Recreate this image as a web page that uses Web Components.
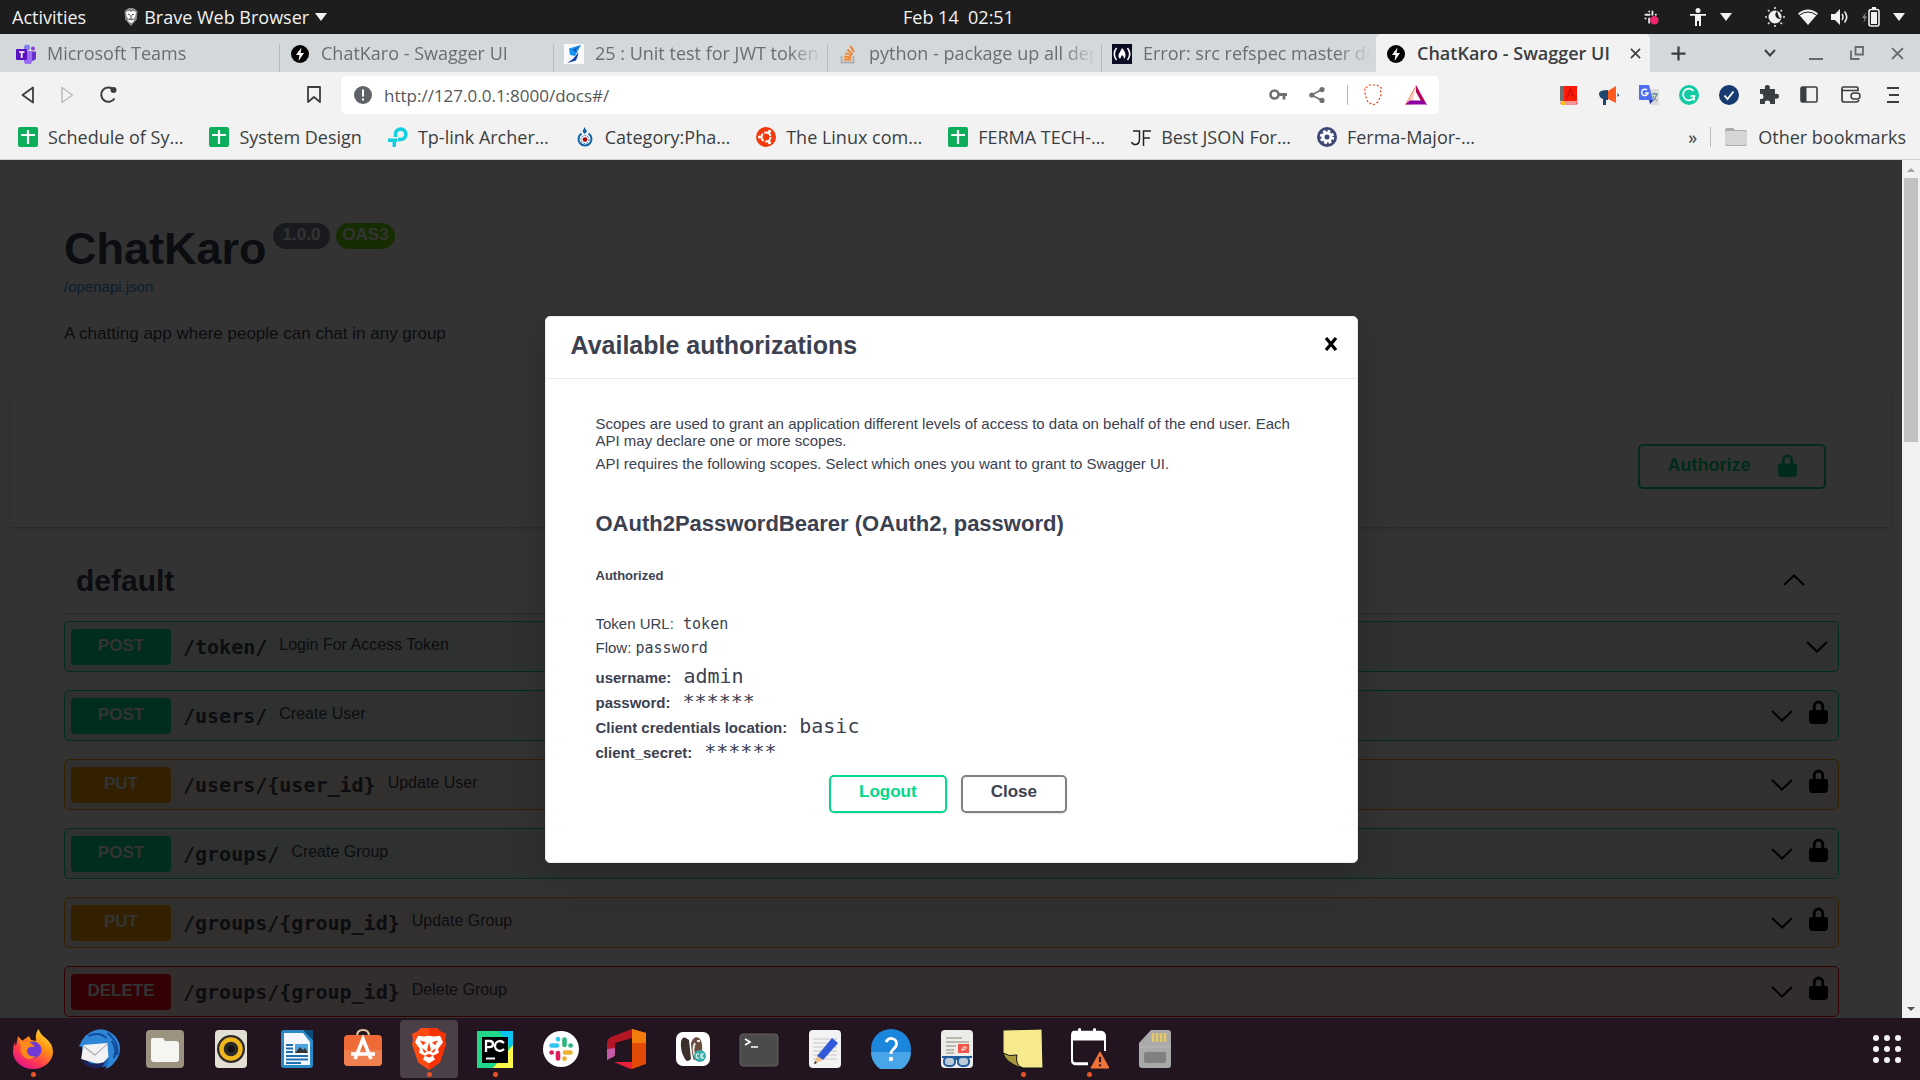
<!DOCTYPE html>
<html lang="en">
<head>
<meta charset="utf-8">
<title>ChatKaro - Swagger UI</title>
<style>
  html, body { margin: 0; height: 100%; }
  body { font-family: "Open Sans", "Noto Sans", sans-serif; font-size: 18px; overflow: hidden; background: #23151f; }
</style>
</head>
<body>
<desktop-shell></desktop-shell>

<script>
const ICONS = {
  /* desktop bar */
  brave: ['0 0 14 18', '<path d="M2.500 1.500 5 0h4l2.500 1.500 2 2-.8 8L7 18 1.300 11.500.5 3.500z" fill="#8d8d8d"/><path d="M2 4l3-1 2 1 2-1 3 1-1 5-2 2 1 2-3 2-3-2 1-2-2-2z" fill="#fff"/><path d="M4 6l2 1M10 6 8 7M7 7v4M5 11l2 1 2-1" stroke="#333" fill="none"/>'],
  tri: ['0 0 12 8', '<path d="M0 0h12L6 8z" fill="#f2f2f2"/>'],
  slackTray: ['0 0 16 16', '<g stroke="#e6e6e6" stroke-width="2" stroke-linecap="round"><path d="M5.500 1.500v.2M1.500 5h4.500M9 1.500V5M12.500 5h.2M1.500 9h.2M5.500 9v4.500"/></g><circle cx="11" cy="11" r="4.500" fill="#f0266f"/>'],
  person: ['0 0 16 18', '<circle cx="8" cy="2.500" r="2.500" fill="#f2f2f2"/><path d="M0 6h16v1.800h-5V18H9v-5H7v5H5V7.800H0z" fill="#f2f2f2"/>'],
  night: ['0 0 20 20', '<circle cx="10" cy="10" r="6.500" fill="#f2f2f2"/><path d="M12 4a5 5 0 0 0-1 6 5 5 0 0 0 5 2l-2-2z" fill="#1d1d1d"/><g stroke="#ddd" stroke-width="1.600"><path d="M10 0v2M10 18v2M0 10h2M18 10h2M3 3l1.500 1.500M15.500 15.500 17 17M3 17l1.500-1.500M15.500 4.500 17 3"/></g>'],
  wifi: ['0 0 20 16', '<path d="M0 4.500Q10-3.500 20 4.500L10 16z" fill="#f2f2f2"/><path d="M1.500 6Q10 0 18.500 6" stroke="#1d1d1d" stroke-width="1" fill="none"/>'],
  sound: ['0 0 18 16', '<path d="M0 5h4l5-5v16l-5-5H0z" fill="#f2f2f2"/><path d="M11 5q2 3 0 6M13.500 2.500q4.500 5.500 0 11" stroke="#e8e8e8" stroke-width="1.600" fill="none"/>'],
  battery: ['0 0 18 20', '<path d="M4 5 0 11h2.500L1.500 16 5 9.500H2.800z" fill="#888"/><rect x="7" y="2.500" width="10" height="16.500" rx="2" fill="none" stroke="#f2f2f2" stroke-width="1.600"/><rect x="9" y="5" width="6" height="12" fill="#f2f2f2"/><path d="M10 0h4v2h-4z" fill="#f2f2f2"/>'],
  /* favicons */
  teams: ['0 0 20 20', '<circle cx="11" cy="3.500" r="3" fill="#7b83eb"/><circle cx="17" cy="4.500" r="2" fill="#8a3fdc"/><path d="M8 7h8v8a4 4 0 0 1-8 3z" fill="#9b6cf0"/><path d="M16 7.500h4v6a3 3 0 0 1-4 3z" fill="#6a2fd0"/><rect y="5" width="11" height="11" rx="1" fill="#5a10c0"/><path d="M3 8h5.500M5.700 8v6" stroke="#fff" stroke-width="1.700"/>'],
  fastapi: ['0 0 20 20', '<circle cx="10" cy="10" r="9" fill="#050505"/><path d="M11.500 3.500 6 11h3.500l-1 6L14 9h-3.500z" fill="#fff"/>'],
  bolt: ['0 0 20 20', '<path fill="#fafafa" d="M0 0h20v20H0z"/><path d="M17 1 5 4.500 6 11l5 1z" fill="#1493f0"/><path d="M17 1 9 6l5 3-5 6-6 4 9-2.500 2.500-7L11 6z" fill="#0a3ea8"/>'],
  stack: ['0 0 20 20', '<path d="M3.500 12v6.500h12V12" stroke="#b0aeb0" stroke-width="1.800" fill="none"/><g stroke="#f48024" stroke-width="1.800"><path d="M6 15.500h7M6.200 12.500l7 .8M7.300 9l6.500 2.500M9.500 5.500l5 4.800M12.500 2l3.500 6"/></g>'],
  fcc: ['0 0 20 20', '<path fill="#0a0a23" d="M0 0h20v20H0z"/><path d="M4.500 4Q0 10 4.500 16M15.500 4Q20 10 15.500 16" stroke="#fff" stroke-width="1.600" fill="none"/><path d="M10 4q4 4 3.500 8.500L12 15q0-3-2-4-1 2-2 4-2-2-1.500-4.500Q8 8 10 4" fill="#fff"/>'],
  /* window controls */
  x: ['0 0 12 12', '<path d="M1 1l10 10M11 1 1 11" stroke="currentColor" stroke-width="1.800"/>'],
  plus: ['0 0 16 16', '<path d="M8 0.500v15M0.500 8h15" stroke="#3b3e40" stroke-width="2.400"/>'],
  down: ['0 0 12 8', '<path d="M1 1l5 5.500L11 1" stroke="#3b3e40" stroke-width="2" fill="none"/>'],
  mini: ['0 0 14 14', '<path d="M0 13h14" stroke="#666a6d" stroke-width="2"/>'],
  restore: ['0 0 14 14', '<path d="M5.500 1H13v7.500H5.500zM1 4.500V13h8.500" fill="none" stroke="#666a6d" stroke-width="1.800"/>'],
  /* toolbar */
  back: ['0 0 14 18', '<path d="M12 1.500v15L1.500 9z" fill="none" stroke="#3b3e40" stroke-width="1.800" stroke-linejoin="round"/>'],
  fwd: ['0 0 14 18', '<path d="M2 1.500v15L12.500 9z" fill="none" stroke="#bcbcbc" stroke-width="1.500" stroke-linejoin="round"/>'],
  reload: ['0 0 18 18', '<path d="M14.500 3.500A7.200 7.200 0 1 0 15.500 12.500" fill="none" stroke="#3b3e40" stroke-width="2"/><circle cx="14.500" cy="4" r="3" fill="#3b3e40"/>'],
  mark: ['0 0 14 18', '<path d="M1 1h12v15l-6-5-6 5z" fill="none" stroke="#3b3e40" stroke-width="1.800" stroke-linejoin="round"/>'],
  info: ['0 0 18 18', '<circle cx="9" cy="9" r="9" fill="#5f6368"/><path d="M9 3.500v7M9 12.500v2" stroke="#fff" stroke-width="2"/>'],
  key: ['0 0 18 12', '<circle cx="5.500" cy="5.500" r="4" fill="none" stroke="#6f7072" stroke-width="2.600"/><path d="M9.500 5.500H18M15 6v4.500" stroke="#6f7072" stroke-width="2.800"/>'],
  share: ['0 0 16 16', '<path d="M13 2.500 2.500 8 13 13.500" fill="none" stroke="#6f7072" stroke-width="1.600"/><g fill="#6f7072"><circle cx="13" cy="2.600" r="2.600"/><circle cx="2.800" cy="8" r="2.600"/><circle cx="13" cy="13.400" r="2.600"/></g>'],
  shield: ['0 0 20 22', '<path d="M6 1h8l2 2 2.500 1-1 4 .5 3-3 7-5 3-5-3-3-7 .5-3-1-4L4 3z" fill="none" stroke="#f43a10" stroke-width="1.200" stroke-dasharray="2 2"/>'],
  bat: ['0 0 22 20', '<path d="M11 0 0 20h7z" fill="#ff9a80" opacity=".5"/><path d="M11 1 1 19" stroke="#f43a10" stroke-dasharray="1 1" fill="none"/><path d="M11 0l11 20-6-4-5-9z" fill="#b8005c"/><path d="M0 19.500 5 15.500h12l5 4z" fill="#8a00a0"/>'],
  book: ['0 0 20 20', '<path d="M1 1h17v15H1z" fill="#ff1a08"/><path d="M1 1h4v15H1z" fill="#707070"/><path d="M2 17h16v2H2z" fill="#fff" stroke="#e33" stroke-width="1"/><path d="M2 16h3l2 4H2z" fill="#f8c400"/><path d="M7.500 13 11.500 4l4 9M9 10h5" stroke="#c81010" stroke-width="1.200" fill="none"/>'],
  horn: ['0 0 20 20', '<path d="M0 8q1-3 9-3v10H7v5H4v-6Q0 13 0 8" fill="#20466e"/><path d="M9 6l8-5v17l-8-4z" fill="#ff5a1c"/><path d="M18.500 8l2 2-2 2z" fill="#20466e"/>'],
  translate: ['0 0 20 20', '<path d="M9 4h11v16h-9z" fill="#dcdcdc"/><path d="M0 0h10l4 15H1q-1 0-1-1z" fill="#4c6ff0"/><path d="M10 15h5l-4 4z" fill="#2a35b8"/><path d="M8 5A3.200 3.200 0 1 0 9 8H6" fill="none" stroke="#fff" stroke-width="1.500"/><path d="M13 9h6M16 8v2M18 9q-1 5-5 7M14 11q1 3 4 5" stroke="#547b8a" fill="none"/>'],
  gram: ['0 0 20 20', '<circle cx="10" cy="10" r="10" fill="#10cba4"/><path d="M14.500 6A5.800 5.800 0 1 0 15.500 11H11.500M15 11v4.500" fill="none" stroke="#fff" stroke-width="1.700"/>'],
  check: ['0 0 20 20', '<circle cx="10" cy="10" r="10" fill="#173a70"/><path d="M5.500 10.500l3 3.500L14.500 6.500" fill="none" stroke="#fff" stroke-width="1.900"/>'],
  puzzle: ['0 0 20 20', '<path d="M1 4h5q-1-4 2.300-4t2.400 4H16v5q4-.8 4 2.300t-4 2.400V19h-5q.8-3.500-2.500-3.500T6 19H1v-5q3.500.5 3.500-2.600T1 9z" fill="#3b3e40"/>'],
  side: ['0 0 18 18', '<rect x="1" y="1" width="16" height="15" rx="1.500" fill="none" stroke="#3b3e40" stroke-width="1.600"/><path d="M1 1h5.500v15H1z" fill="#3b3e40"/>'],
  wallet: ['0 0 20 18', '<path d="M17 5V2.500Q17 1 15.500 1h-13Q1 1 1 2.500V14q0 2 2 2h12q2 0 3-2" fill="none" stroke="#3b3e40" stroke-width="1.700"/><path d="M1 3q0 1.500 2 1.500h14" fill="none" stroke="#3b3e40" stroke-width="1.700"/><rect x="10" y="7" width="9" height="6" rx="3" fill="none" stroke="#3b3e40" stroke-width="1.500"/>'],
  menu: ['0 0 14 18', '<path d="M1 2h12M3 9h10M1 16h12" stroke="#3b3e40" stroke-width="2"/>'],
  /* bookmark favicons */
  sheet: ['0 0 20 20', '<rect width="20" height="20" rx="2" fill="#0cae5c"/><path d="M10 3v14M3 8h14" stroke="#fff" stroke-width="2.200"/>'],
  tplink: ['0 0 20 20', '<path d="M7.500 10V7a5.200 5.200 0 1 1 5.200 5.500H10" fill="none" stroke="#12cfe0" stroke-width="3.600"/><path d="M0 11.500h9.300V15H8v5H4.500v-5H0z" fill="#12cfe0"/>'],
  commons: ['0 0 20 20', '<path d="M9.500 0l2.500 4.500L9.500 7 7.500 4.500z" fill="#0c63a8"/><path d="M6.500 6.500a6.500 6.500 0 1 0 7 0" fill="none" stroke="#0c63a8" stroke-width="2"/><circle cx="10" cy="12.500" r="4" fill="none" stroke="#0c63a8" stroke-width="1" stroke-dasharray="1.500 1.500"/><circle cx="10" cy="12.500" r="2.300" fill="#b00000"/>'],
  ubuntu: ['0 0 20 20', '<circle cx="10" cy="10" r="10" fill="#f43a0c"/><circle cx="10" cy="10" r="4.500" fill="none" stroke="#fff" stroke-width="2" stroke-dasharray="7.900 1.500"/><g fill="#fff"><circle cx="3.500" cy="10" r="1.600"/><circle cx="13.500" cy="4.300" r="1.600"/><circle cx="13.500" cy="15.700" r="1.600"/></g>'],
  jf: ['0 0 20 20', '<path d="M2 4h6.500v8q0 6-5 5.500-2-.5-3-2.500M12.500 19V4H20M12.500 11H19" fill="none" stroke="#222" stroke-width="1.500"/>'],
  gear: ['0 0 20 20', '<circle cx="10" cy="10" r="10" fill="#3d4674"/><circle cx="10" cy="10" r="4" fill="none" stroke="#fff" stroke-width="3"/><circle cx="10" cy="10" r="6" fill="none" stroke="#fff" stroke-width="2.400" stroke-dasharray="2.700 2"/>'],
  folder: ['0 0 24 20', '<path d="M1 4q0-3 2-3h6l2 2h10q2 0 2 2v12q0 2-2 2H3q-2 0-2-2z" fill="#aaa"/><path d="M1 6q0-2 2-2h18q2 0 2 2v10q0 2-2 2H3q-2 0-2-2z" fill="#d6d6d6"/>'],
  /* document */
  lock: ['0 0 20 24', '<path d="M4 10V6.500a6 6 0 0 1 12 0V10h1.500Q20 10 20 12v8q0 4-4 4H4q-4 0-4-4v-8q0-2 2.500-2zM7 10h6V6.500a3 3 0 0 0-6 0z" fill="currentColor"/>'],
  chevron: ['0 0 22 12', '<path d="M1 1l10 9.500L21 1" fill="none" stroke="#000" stroke-width="2"/>'],
  closeX: ['0 0 14 14', '<path d="M2 1l10 12M12 1 2 13" stroke="#000" stroke-width="3.200"/>'],
  /* dock */
  firefox: ['0 0 40 40', '<defs><linearGradient id="a" x1="1" y1="0" x2=".3" y2="1"><stop stop-color="#fff44f"/><stop offset=".4" stop-color="#ff980e"/><stop offset=".75" stop-color="#ff3a50"/><stop offset="1" stop-color="#e31587"/></linearGradient></defs><path d="M5 7l4 5q4-3 7-5l2 4 5 1Q22 4 25.500 0q1.500 5 7 9 7.500 6 7.500 14a20 17 0 0 1-40 0q0-6 2-10 0 3 1 4z" fill="url(#a)"/><circle cx="20" cy="21" r="8.500" fill="#7139d4"/><path d="M5 8l6 5q5-1 7 1l4 4q-8-1-8 4 1 7 9 5-6 6-12 1-5-5-3-10z" fill="#ff8a1c"/>'],
  thunderbird: ['0 0 40 40', '<circle cx="22" cy="20" r="18" fill="#1a6bbd"/><path d="M1 17Q6 4 17 1q10-3 19 7 8 12-1 25-3 5-9 7 4-6 3-11z" fill="#2f86d6"/><path d="M28 4q12 10 9 22M32 12q6 8 2 17M10 7Q20 2 27 9" stroke="#134d9c" stroke-width="2" fill="none"/><path d="M5 16 28 14l1 14-7 8L3 30z" fill="#f2f2f4"/><path d="M5 17l11 9 12-11" stroke="#aaa" fill="none"/><path d="M2 29q8 9 24 4-3 7-9 6Q5 38 2 29" fill="#1a2460"/>'],
  files: ['0 0 40 40', '<rect x="1" y="1" width="38" height="38" rx="4" fill="#9b927f"/><path d="M6 11q0-2 2-2h10l2 3h11q3 0 3 3v15q0 3-3 3H9q-3 0-3-3z" fill="#f5f5f2"/>'],
  rhythm: ['0 0 40 40', '<rect x="4" y="1" width="32" height="38" rx="4" fill="#e4dfd4"/><circle cx="20" cy="20" r="14" fill="#2b2b2b"/><circle cx="20" cy="20" r="9.500" fill="none" stroke="#f0b71c" stroke-width="4.500"/><circle cx="20" cy="20" r="3.500" fill="#111"/>'],
  writer: ['0 0 40 40', '<path d="M7 1h20l9 10v25q0 3-3 3H7q-3 0-3-3V4q0-3 3-3" fill="#2b8ac8"/><path d="M7 4h19l7 9v23H7z" fill="#f4f8fc"/><path d="M26 1h10v10z" fill="#0d4a78"/><path d="M9 16h7M9 19.500h7M9 23h7M9 27h22M9 30.500h22M9 34h15" stroke="#1f6fb0" stroke-width="1.800"/><path d="M18 15h13v9H18z" fill="#4ba5de"/><path d="M18 24l5-6 3 3 2-2 3 5z" fill="#333"/>'],
  software: ['0 0 40 40', '<path d="M14 7Q14 1 20 1t6 6" fill="none" stroke="#e7c8a0" stroke-width="2"/><rect x="1" y="6" width="38" height="31" rx="4" fill="#ef6a37"/><path d="M1 21h38v12q0 4-4 4H5q-4 0-4-4z" fill="#f08050"/><path d="M12 30l8-20 8 20M8 25h24" stroke="#fff" stroke-width="3.600" fill="none"/>'],
  braveApp: ['0 0 40 44', '<path d="M12 0h16l4 4 5 2-1 7 1 4-6 19-11 8L9 36 3 17l1-4-1-7 5-2z" fill="#ff4a14"/><path d="M20 0h8l4 4 5 2-1 7 1 4-6 19-11 8z" fill="#f93208"/><path d="M9 8l6 1 5-1 5 1 6-1 3 7-5 7 1 4-6 3 2 4-6 4-6-4 2-4-6-3 1-4-5-7z" fill="#fff"/><path d="M11 13l6 2-3 3zM29 13l-6 2 3 3zM20 15l2 8-2 2-2-2zM13 21l5 4-3 1zM27 21l-5 4 3 1zM16 29l4-2 4 2-4 2z" fill="#fa400f"/>'],
  pycharm: ['0 0 40 40', '<path d="M2 2h36v37H2z" fill="#21d789"/><path d="M24 2h14v20z" fill="#07c3f2"/><path d="M38 16v23H18z" fill="#fcf84a"/><path d="M7 8h26v26H7z" fill="#000"/><path d="M11 23V12h3.500q3.500 0 3.500 3t-3.500 3.200H11M29 14q-2-2-4.500-2-4.500 1-4.500 5t4.500 5q2.500 0 4.500-2" fill="none" stroke="#fff" stroke-width="2.300"/><path d="M11 29.500h9" stroke="#fff" stroke-width="2"/>'],
  slack: ['0 0 40 40', '<circle cx="20" cy="20" r="18" fill="#fff"/><g stroke-width="4.600" stroke-linecap="round" fill="none"><path d="M17 10v.2M10.500 16.500H16" stroke="#36c5f0"/><path d="M23.500 10.500V16M29.500 16.500h.2" stroke="#2eb67d"/><path d="M24 23.500h5.500M23.500 29.500v.2" stroke="#ecb22e"/><path d="M17 24v5.500M10.500 23.500h.2" stroke="#e01e5a"/></g>'],
  office: ['0 0 40 40', '<path d="M25 0 4 8Q0 10 0 14v16l6-2q2-1 2-4V14l17-5z" fill="#b51625"/><path d="M0 20v11l6-3q2-1 2-4v-5z" fill="#c65aa8"/><path d="M25 0l14 4v31l-14 5z" fill="#e34a08"/><path d="M25 0l14 4v10H25z" fill="#f47c0c"/><path d="M7 33h18v7q-2 0-4-1z" fill="#e8203a"/>'],
  beaver: ['0 0 40 40', '<rect x="3" y="3" width="34" height="34" rx="7" fill="#fff"/><path d="M8 13q1-6 5-4l3 2 2 19q-4 4-6 0Q7 22 8 13" fill="#3c2f2b"/><path d="M18 14q3-8 8-5 4 3 3 14-1 8-8 8-2-3-3-17" fill="#6b4d3f"/><path d="M22 14q-3 6 0 14M24 12h3" stroke="#eee" stroke-width="1.800" fill="none"/><circle cx="27" cy="27" r="6" fill="#3aafa9"/><path d="M26 25q-3-1-3 2t3 2M31 25h-3v4h3M28 27h2" stroke="#fff" fill="none"/>'],
  terminal: ['0 0 40 40', '<rect x="1" y="5" width="38" height="32" rx="3" fill="#4b4b4b" stroke="#606060"/><path d="M6 10l5 3-5 3M12 18h7" stroke="#fff" stroke-width="1.700" fill="none"/>'],
  editor: ['0 0 40 40', '<rect x="4" y="1" width="32" height="38" rx="4" fill="#f3f3f3"/><path d="M8 10h24M8 14h24M8 18h24M8 22h24M8 26h24M8 30h24" stroke="#c8c8c8"/><path d="M27 9l6 5-15 17-6-4z" fill="#3158d8"/><path d="M12 27l6 4-9 4z" fill="#edc08d"/><path d="M9 35l1-3 2 2z" fill="#222"/>'],
  help: ['0 0 40 40', '<circle cx="20" cy="20" r="20" fill="#1c86dc"/><path d="M0 23h40a20 20 0 0 1-40 0" fill="#48a5e8"/><path d="M15 13q2-4 6-3.500 5 1 4.500 6-.5 3-3.500 5-2 1.500-2 4.500" fill="none" stroke="#fff" stroke-width="2.800"/><circle cx="20" cy="30" r="2.200" fill="#fff"/>'],
  viewer: ['0 0 40 40', '<rect x="4" y="1" width="32" height="38" rx="4" fill="#ececea"/><path d="M9 9h16M9 13h23M9 17h10M9 21h8M9 24h8" stroke="#aaa79a" stroke-width="1.700"/><path d="M21 15h11v9H21z" fill="#f05548"/><path d="M24 21q6 0 5-3-4-1-3 3" stroke="#fff" fill="none"/><path d="M5 28h30M17 30h5" stroke="#245d9c" stroke-width="2"/><rect x="7" y="28" width="11" height="9" rx="4" fill="#bcc9d6" stroke="#245d9c" stroke-width="2"/><rect x="21" y="28" width="11" height="9" rx="4" fill="#bcc9d6" stroke="#245d9c" stroke-width="2"/>'],
  sticky: ['0 0 40 40', '<path d="M0 1 39 0l1 39H20Q3 32 0 25z" fill="#f7e98e" stroke="#111"/><path d="M0 24q6 4 14 2-2 8 4 13Q2 33 0 24" fill="#a79a3c" stroke="#111"/>'],
  calendar: ['0 0 40 44', '<path d="M5 3h4V1q2-2 3 0v2h12V1q2-2 3 0v2h4q6 0 6 6v15h-2V13H4v20q0 3 3 3h12v3H7q-5 0-5-5V8q0-5 3-5" fill="#fff"/><path d="M31 25 22 42h18z" fill="#f37338" stroke="#f37338" stroke-linejoin="round"/><path d="M31 30v6M31 38v2" stroke="#222" stroke-width="2.200"/>'],
  sdcard: ['0 0 40 40', '<path d="M16 1h17q3 0 3 3v32q0 3-3 3H7q-3 0-3-3V14z" fill="#a9a9a9"/><path d="M18 4v9M22 4v9M26 4v9M30 4v9" stroke="#e8c860" stroke-width="2.500"/><rect x="9" y="23" width="22" height="11" rx="2" fill="#808080"/><path d="M4 18h32" stroke="#b8b8b8"/>'],
  grid: ['0 0 28 28', '<g fill="#f4f4f4"><circle cx="3" cy="3" r="3"/><circle cx="14" cy="3" r="3"/><circle cx="25" cy="3" r="3"/><circle cx="3" cy="14" r="3"/><circle cx="14" cy="14" r="3"/><circle cx="25" cy="14" r="3"/><circle cx="3" cy="25" r="3"/><circle cx="14" cy="25" r="3"/><circle cx="25" cy="25" r="3"/></g>']
};

const BASE = `*{box-sizing:border-box} button{font:inherit;color:inherit;background:none;border:0;padding:0;margin:0;display:flex;align-items:center;justify-content:center} a{color:inherit;text-decoration:none} h1,h2,h3,h4,p{margin:0}`;
const define = (name, render) => customElements.define(name, class extends HTMLElement {
  connectedCallback() {
    if (this.shadowRoot) return;
    const [css, html] = render(this);
    this.attachShadow({ mode: 'open' }).innerHTML = `<style>${BASE}${css}</style>${html}`;
  }
});
const icon = (name, w, h = w) => `<ui-icon name="${name}" style="width:${w}px;height:${h}px"></ui-icon>`;

define('ui-icon', el => {
  const [box, body] = ICONS[el.getAttribute('name')];
  return [`:host{display:block;flex:none} svg{display:block;width:100%;height:100%}`,
    `<svg viewBox="${box}" preserveAspectRatio="none" aria-hidden="true">${body}</svg>`];
});

define('system-bar', () => [`
  :host{display:grid;grid-template-columns:1fr auto 1fr;align-items:center;height:34px;background:#1d1d1d;color:#f2f2f2;padding:0 15px 0 12px;font-size:18px}
  .left,.right,.app{display:flex;align-items:center}
  .left{gap:38px}.app{gap:6px}.right{justify-content:flex-end;gap:13px}
  button{line-height:24px}
  .date{white-space:pre}.access{gap:14px;margin:0 20px 0 18px}`,
  `<div class="left"><button>Activities</button><button class="app">${icon('brave', 14, 18)}Brave Web Browser${icon('tri', 12, 8)}</button></div>
   <button class="date">Feb 14  02:51</button>
   <div class="right">${icon('slackTray', 15)}<button class="access" aria-label="Accessibility">${icon('person', 16, 18)}${icon('tri', 12, 8)}</button>${icon('night', 20)}${icon('wifi', 20, 16)}${icon('sound', 18, 16)}${icon('battery', 18, 20)}${icon('tri', 12, 8)}</div>`]);

define('browser-tab', el => {
  const active = el.hasAttribute('active');
  return [`
  :host{display:flex;align-items:center;flex:0 1 274px;min-width:0;height:38px;color:${active ? '#3b3e40' : '#6b6e70'};${active ? 'background:#f2f2f2;border-radius:5px 5px 0 0;font-weight:600' : ''}}
  .tab{display:flex;gap:11px;flex:1;min-width:0;height:28px;padding:0 0 0 10px;margin-top:10px;align-items:flex-start;text-align:left;justify-content:flex-start;border-right:${active ? 0 : 1}px solid #b5babd}
  :host([last]) .tab{border-right:0}
  .t{flex:1;min-width:0;overflow:hidden;white-space:nowrap;line-height:24px;margin-top:-3px;font-size:18px;${active ? '' : 'margin-right:5px;mask-image:linear-gradient(90deg,#000 calc(100% - 34px),transparent)'}}
  .close{width:30px;height:20px}`,
  `<button class="tab">${icon(el.getAttribute('icon'), 20)}<span class="t"><slot></slot></span></button>${active ? `<button class="close" aria-label="Close tab">${icon('x', 11)}</button>` : ''}`];
});

define('tab-strip', () => [`
  :host{display:flex;align-items:center;height:38px;background:#d3d8db;padding:0 16px 0 6px}
  .new{width:56px;height:38px}.win{margin-left:auto;display:flex;gap:27px;align-items:center;color:#666a6d}
  .search{margin-right:6px}`,
  `<browser-tab icon="teams">Microsoft Teams</browser-tab>
   <browser-tab icon="fastapi">ChatKaro - Swagger UI</browser-tab>
   <browser-tab icon="bolt">25 : Unit test for JWT token</browser-tab>
   <browser-tab icon="stack">python - package up all dep</browser-tab>
   <browser-tab icon="fcc" last>Error: src refspec master do</browser-tab>
   <browser-tab icon="fastapi" active>ChatKaro - Swagger UI</browser-tab>
   <button class="new" aria-label="New tab">${icon('plus', 15)}</button>
   <div class="win"><button class="search" aria-label="Search tabs">${icon('down', 12, 8)}</button><button aria-label="Minimize">${icon('mini', 14)}</button><button aria-label="Restore">${icon('restore', 14)}</button><button aria-label="Close">${icon('x', 13)}</button></div>`]);

define('address-row', () => [`
  :host{display:flex;align-items:center;height:46px;padding:0 17px 0 21px}
  .nav{display:flex;gap:25px;align-items:center;flex:1 0 0}
  .nav :last-child{margin-left:auto}
  .omni{display:flex;align-items:center;gap:12px;height:38px;background:#fff;border-radius:5px;padding:0 12px 0 13px;margin-left:20px;flex:0 1 1098px}
  input{flex:1;min-width:0;border:0;outline:0;background:none;font:inherit;font-size:17px;color:#53575a;padding:0}
  .acts{display:flex;align-items:center;gap:22px}.sep{width:1px;height:20px;background:#bbb;margin-right:-7px}
  .ext{display:flex;justify-content:flex-end;gap:20px;align-items:center;flex:0 0 464px}
  .ext button{width:20px}.last{display:flex;gap:22px}`,
  `<div class="nav"><button aria-label="Back">${icon('back', 14, 18)}</button><button aria-label="Forward">${icon('fwd', 14, 18)}</button><button aria-label="Reload">${icon('reload', 18)}</button><button aria-label="Bookmark this page">${icon('mark', 14, 18)}</button></div>
   <div class="omni">${icon('info', 18)}<input aria-label="Address" value="http://127.0.0.1:8000/docs#/">
    <div class="acts">${icon('key', 18, 12)}${icon('share', 16)}<span class="sep"></span>${icon('shield', 20, 22)}${icon('bat', 22, 20)}</div></div>
   <div class="ext">${['book','horn','translate','gram','check','puzzle'].map(n => `<button aria-label="${n}">${icon(n, 20)}</button>`).join('')}<div class="last"><button aria-label="Side panel">${icon('side', 18)}</button><button aria-label="Wallet">${icon('wallet', 20, 18)}</button><button aria-label="Menu">${icon('menu', 14, 18)}</button></div></div>`]);

define('bookmark-link', el => [`
  :host{display:block;flex:none} a{display:flex;align-items:center;gap:10px;white-space:nowrap}`,
  `<a href="#">${icon(el.getAttribute('icon'), el.getAttribute('icon') === 'folder' ? 24 : 20, 20)}<slot></slot></a>`]);

define('bookmark-bar', () => [`
  :host{display:flex;align-items:center;justify-content:space-between;height:42px;padding:0 14px 4px 18px;color:#3b3e40;font-size:18px;line-height:24px;border-bottom:1px solid #d0d0d0}
  .list,.rest{display:flex;align-items:center}
  .list{gap:26px}.rest{gap:13px}.sep{width:1px;height:20px;background:#bbb}`,
  `<div class="list"><bookmark-link icon="sheet">Schedule of Sy…</bookmark-link><bookmark-link icon="sheet">System Design</bookmark-link><bookmark-link icon="tplink">Tp-link Archer…</bookmark-link><bookmark-link icon="commons">Category:Pha…</bookmark-link><bookmark-link icon="ubuntu">The Linux com…</bookmark-link><bookmark-link icon="sheet">FERMA TECH-…</bookmark-link><bookmark-link icon="jf">Best JSON For…</bookmark-link><bookmark-link icon="gear">Ferma-Major-…</bookmark-link></div>
   <div class="rest"><button>»</button><span class="sep"></span><bookmark-link icon="folder">Other bookmarks</bookmark-link></div>`]);

const TONES = { POST: ['#00e28f', '#e8f6f0'], PUT: ['#ffa000', '#fbf1e6'], DELETE: ['#ff0010', '#f7e6e6'] };
define('operation-row', el => {
  const [line, fill] = TONES[el.getAttribute('method')];
  return [`
  :host{display:flex;align-items:center;height:51px;border:1px solid ${line};border-radius:5px;background:${fill};padding:0 10px 0 6px;color:#3b4151}
  .method{width:100px;height:36px;border-radius:4px;background:${line};color:#fff;font-weight:700;font-size:17px;text-shadow:0 1px 0 rgba(0,0,0,.1);flex:none;padding-bottom:2px}
  .path{font:700 20px/24px "DejaVu Sans Mono",monospace;margin:0 12px}
  .desc{font-size:16px;line-height:20px;flex:1;padding-bottom:3px}
  .tools{display:flex;align-items:center;gap:16px;color:#000}
  .lk{padding-bottom:8px}`,
  `<button class="method">${el.getAttribute('method')}</button><span class="path">${el.getAttribute('path')}</span><span class="desc"><slot></slot></span>
   <div class="tools"><button aria-label="Expand">${icon('chevron', 22, 12)}</button>${el.hasAttribute('open-access') ? '' : `<button class="lk" aria-label="Authorized">${icon('lock', 19, 24)}</button>`}</div>`];
});

define('api-document', () => [`
  :host{display:block;font-family:"Liberation Sans",Arial,sans-serif;color:#3b4151;background:#fff;padding:0 10px}
  header{padding:58px 54px 0;height:232px}
  .title{display:flex;align-items:flex-start;gap:6px}
  h1{font-size:45px;line-height:52px;margin-top:5px}
  .tag{font-size:17px;font-weight:700;line-height:24px;color:#fff;border-radius:14px;height:26px;margin-top:5px;padding:0 10px;background:#7d8492}
  .oas{background:#69e000;padding:0 6px}
  .url{display:block;font-size:15px;line-height:18px;color:#4990e2;margin-top:3px}
  .info{font-size:17px;line-height:20px;margin-top:28px}
  .scheme{height:135px;display:flex;justify-content:flex-end;padding:52px 66px 0 0;box-shadow:0 1px 2px rgba(0,0,0,.25)}
  .auth{width:188px;height:45px;border:2px solid #00d884;border-radius:5px;color:#00d884;font-weight:700;font-size:18px;gap:27px;padding-bottom:3px}
  .wrap{padding:25px 53px 0 54px}
  .section{display:flex;align-items:center;justify-content:space-between;height:62px;border-bottom:1px solid rgba(59,65,81,.3);padding:0 34px 4px 12px}
  h2{font-size:30px;line-height:36px}.up{transform:rotate(180deg);padding-top:2px}
  .ops{display:flex;flex-direction:column;gap:18px;padding-top:7px}`,
  `<header><div class="title"><h1>ChatKaro</h1><span class="tag">1.0.0</span><span class="tag oas">OAS3</span></div>
   <a class="url" href="#">/openapi.json</a><p class="info">A chatting app where people can chat in any group</p></header>
   <section class="scheme"><button class="auth">Authorize${icon('lock', 19, 23)}</button></section>
   <div class="wrap"><div class="section"><h2>default</h2><button class="up" aria-label="Collapse">${icon('chevron', 22, 12)}</button></div>
   <div class="ops">
    <operation-row method="POST" path="/token/" open-access>Login For Access Token</operation-row>
    <operation-row method="POST" path="/users/">Create User</operation-row>
    <operation-row method="PUT" path="/users/{user_id}">Update User</operation-row>
    <operation-row method="POST" path="/groups/">Create Group</operation-row>
    <operation-row method="PUT" path="/groups/{group_id}">Update Group</operation-row>
    <operation-row method="DELETE" path="/groups/{group_id}">Delete Group</operation-row>
   </div></div>`]);

define('auth-dialog', () => [`
  :host{display:block;width:813px;max-width:90%;background:#fff;border:1px solid #ebebeb;border-radius:5px;box-shadow:0 12px 38px rgba(0,0,0,.2);font-family:"Liberation Sans",Arial,sans-serif;color:#3b4151;font-size:15px}
  .head{display:flex;align-items:center;justify-content:space-between;height:62px;padding:0 19px 4px 25px;border-bottom:1px solid #ebebeb}
  .head button{padding-bottom:3px}
  h3{font-size:25px;line-height:30px}
  .body{padding:36px 50px 49px}
  .note{line-height:17px;margin-bottom:6px}
  h4{font-size:22px;line-height:28px;margin:38px 0 30px}
  h5{font-size:13px;line-height:16px;margin:0 0 30px}
  .kv{line-height:20px;margin-bottom:4px}
  code{font-family:"DejaVu Sans Mono",monospace;font-size:15px}
  .gap{margin-left:5px}
  dl{margin:6px 0 0}dl div{display:flex;gap:12px;align-items:baseline;height:25px;line-height:25px}
  dt{font-weight:700}dd{margin:0}dd code{font-size:20px}
  .btns{display:flex;justify-content:center;gap:14px;margin:11px 6px 0 0}
  .btns button{height:38px;padding:0 28px 3px;border:2px solid #808080;border-radius:5px;font-weight:700;font-size:17px;box-shadow:0 1px 2px rgba(0,0,0,.1)}
  .btns .out{color:#00d88a;border-color:#00d88a}`,
  `<div class="head"><h3>Available authorizations</h3><button aria-label="Close dialog">${icon('closeX', 14)}</button></div>
   <div class="body"><p class="note">Scopes are used to grant an application different levels of access to data on behalf of the end user. Each API may declare one or more scopes.</p>
   <p class="note">API requires the following scopes. Select which ones you want to grant to Swagger UI.</p>
   <h4>OAuth2PasswordBearer (OAuth2, password)</h4><h5>Authorized</h5>
   <p class="kv">Token URL: <code class="gap">token</code></p><p class="kv">Flow: <code>password</code></p>
   <dl><div><dt>username:</dt><dd><code>admin</code></dd></div><div><dt>password:</dt><dd><code>******</code></dd></div><div><dt>Client credentials location:</dt><dd><code>basic</code></dd></div><div><dt>client_secret:</dt><dd><code>******</code></dd></div></dl>
   <div class="btns"><button class="out">Logout</button><button>Close</button></div></div>`]);

define('browser-view', () => [`
  :host{display:flex;flex:1;min-height:0}
  .stage{position:relative;flex:1;overflow:hidden;background:#fff}
  .shade{position:absolute;inset:0;background:rgba(0,0,0,.8);display:flex;align-items:center;justify-content:center}
  .bar{width:18px;background:#f1f1f1;display:flex;flex-direction:column;align-items:center;padding:8px 0 7px}
  .up,.dn{border:4px solid transparent;width:0;height:0}
  .up{border-top:0;border-bottom-color:#a3a3a3}.dn{border-bottom:0;border-top-color:#505050;margin-top:auto}
  .thumb{width:14px;height:264px;background:#c1c1c1;margin-top:6px}`,
  `<div class="stage"><api-document></api-document><div class="shade"><auth-dialog role="dialog" aria-label="Available authorizations"></auth-dialog></div></div>
   <div class="bar"><span class="up"></span><span class="thumb"></span><span class="dn"></span></div>`]);

define('dock-item', el => [`
  :host{display:block;flex:none}
  button{position:relative;width:58px;height:58px;border-radius:4px;${el.hasAttribute('active') ? 'background:#4b3f48' : ''}}
  .dot{position:absolute;left:27px;bottom:1px;width:5px;height:5px;border-radius:50%;background:#e95420}`,
  `<button aria-label="${el.getAttribute('icon')}">${icon(el.getAttribute('icon'), +el.getAttribute('w') || 40, +el.getAttribute('h') || 40)}${el.hasAttribute('running') ? '<span class="dot"></span>' : ''}</button>`]);

define('app-dock', () => [`
  :host{display:flex;align-items:center;gap:8px;height:62px;background:#23151f;padding:0 19px 0 4px}
  .grid{margin-left:auto}`,
  `<dock-item icon="firefox" running></dock-item><dock-item icon="thunderbird" w="42"></dock-item><dock-item icon="files"></dock-item><dock-item icon="rhythm"></dock-item><dock-item icon="writer"></dock-item><dock-item icon="software"></dock-item><dock-item icon="braveApp" w="40" h="42" active running></dock-item><dock-item icon="pycharm" running></dock-item><dock-item icon="slack"></dock-item><dock-item icon="office"></dock-item><dock-item icon="beaver"></dock-item><dock-item icon="terminal"></dock-item><dock-item icon="editor"></dock-item><dock-item icon="help"></dock-item><dock-item icon="viewer"></dock-item><dock-item icon="sticky" running></dock-item><dock-item icon="calendar" w="40" h="42" running></dock-item><dock-item icon="sdcard"></dock-item>
   <button class="grid" aria-label="Show applications">${icon('grid', 28)}</button>`]);

define('desktop-shell', () => [`
  :host{display:flex;flex-direction:column;height:100vh}
  .chrome{background:#f2f2f2}`,
  `<system-bar></system-bar><tab-strip></tab-strip><div class="chrome"><address-row></address-row><bookmark-bar></bookmark-bar></div><browser-view></browser-view><app-dock></app-dock>`]);
</script>
</body>
</html>
